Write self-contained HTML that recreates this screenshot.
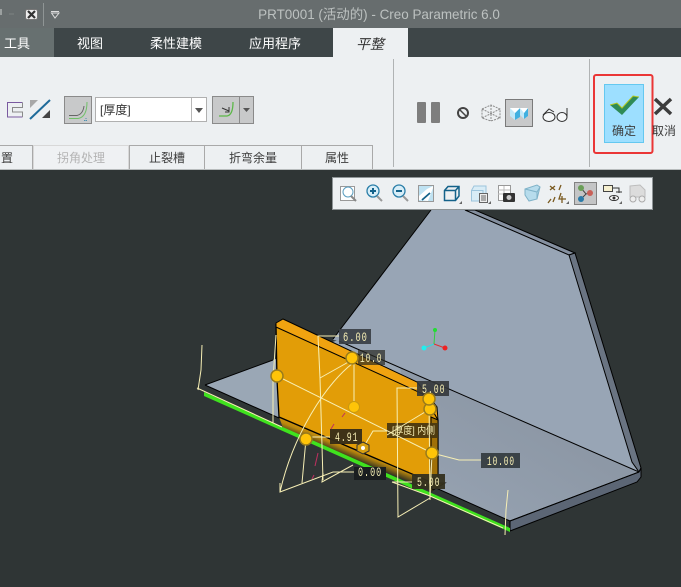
<!DOCTYPE html>
<html><head><meta charset="utf-8"><style>
html,body{margin:0;padding:0;background:#2f3535;overflow:hidden}
svg{display:block;position:absolute;left:0;top:0}
text{font-family:"Liberation Sans","Noto Sans CJK SC",sans-serif}
.t{font-size:13px;fill:#fff;text-anchor:middle}
.g{font-size:12px;fill:#3c3c3c;text-anchor:middle}
.d{font-family:"Liberation Mono",monospace;font-size:13px;fill:#f7efb5;letter-spacing:1.5px}
</style></head><body>
<svg width="681" height="587" viewBox="0 0 681 587" xmlns="http://www.w3.org/2000/svg">
<defs>
<linearGradient id="og" gradientUnits="userSpaceOnUse" x1="362" y1="446" x2="356" y2="461"><stop offset="0" stop-color="#e29d07"/><stop offset=".5" stop-color="#b8860e"/><stop offset="1" stop-color="#2f3020"/></linearGradient>
<linearGradient id="pl" gradientUnits="userSpaceOnUse" x1="530" y1="420" x2="470" y2="520"><stop offset="0" stop-color="#8d98a6"/><stop offset="1" stop-color="#95a1b0"/></linearGradient>
</defs>
<rect width="681" height="587" fill="#2f3535"/>

<!-- model -->
<g stroke="#000" stroke-width="1">
<polygon points="431,210 475,210 575,253 641,468 639,472 339,341 333,340 340,330" fill="#98a5b5" stroke="none"/>
<polygon points="465,210 475,210 575,253 569,255" fill="#8590a0"/>
<polygon points="569,255 575,253 641,468 639,472 632,462" fill="#6a7482"/>
<polygon points="205,385 273,360 339,340 639,472 510,521" fill="url(#pl)" stroke="none"/>
<polygon points="205,385 273,360 339,340 400,367 420,480" fill="#9aa7b5" stroke="none"/>
<polygon points="639,472 641,468 641,477 637,482 510,531 510,521" fill="#5c6675"/>
<polyline points="431,210 333,339" fill="none"/>
<polyline points="339,341 639,472" fill="none"/>
<polyline points="205,385 510,521 639,472" fill="none"/>
<polyline points="205,385 273,360" fill="none"/>
<line x1="510" y1="521" x2="510" y2="531"/>
</g>

<polygon points="279,417 433,483 433,492 330,449 283,428" fill="url(#og)"/>
<polygon points="276,325 423,390 438,420 438,483 433,483 279,417 277,380" fill="#e29d07" stroke="#000" stroke-width="1.300"/>
<polygon points="276,323 283,319 417,382 437,407 438,420 423,394 276,327" fill="#f0a310" stroke="#000"/>
<polygon points="431,417 438,420 438,483 445,483 433,490 431,484" fill="#a07008" stroke="#000"/>
<polygon points="204,392 510,528 510,532 204,396" fill="#3fe21e"/>

<!-- dim boxes -->
<g>
<rect x="339" y="329" width="32" height="15" fill="#3a3f45" fill-opacity=".92"/>
<rect x="358" y="350" width="27" height="15" fill="#2a2a22" fill-opacity=".7"/>
<rect x="417" y="381" width="32" height="15" fill="#333638" fill-opacity=".9"/>
<rect x="330" y="429" width="32" height="15" fill="#352c18" fill-opacity=".95"/>
<rect x="387" y="423" width="51" height="15" fill="#4a3810" fill-opacity=".95"/>
<rect x="354" y="467" width="32" height="13" fill="#1a1e20"/>
<rect x="412" y="474" width="33" height="15" fill="#33301f" fill-opacity=".95"/>
<rect x="481" y="453" width="39" height="15" fill="#3a4247"/>
</g>

<!-- sketch lines -->
<g fill="none" stroke="#f7efb5" stroke-width="1">
<polyline points="277,376 432,453 459,460 481,460"/>
<polyline points="339,336 318,336 320,378 323,480"/>
<polyline points="320,378 352,360"/>
<polyline points="354,363 354,407"/>
<path d="M353,363 C325,385 293,435 280,492"/>
<polyline points="280,483 280,492 333,472 354,472"/>
<polyline points="353,465 322,482 323,473"/>
<polyline points="306,439 302,483"/>
<polyline points="310,437 330,437"/>
<polyline points="417,388 397,388 398,517 430,498"/>
<polyline points="430,409 387,435"/>
<polyline points="429,399 430,500"/>
<polyline points="432,453 430,498"/>
<polyline points="412,482 392,482"/>
<polyline points="363,448 373,431 387,431"/>
<polyline points="202,345 201,370 198,390"/>
<polyline points="197,388 282,427"/>
<polyline points="276,335 273,380 273,423"/>
<polyline points="508,490 506,510 505,535"/>
<polyline points="503,528 430,496 392,482"/>
</g>
<g stroke="#c03060" stroke-width="1"><line x1="345" y1="413" x2="342" y2="417"/><line x1="334" y1="424" x2="331" y2="429"/><line x1="318" y1="453" x2="315" y2="466"/><line x1="314" y1="475" x2="312" y2="479"/></g>

<!-- handles -->
<g fill="#ffc408" stroke="#9a7c1c" stroke-width="1.500">
<circle cx="277" cy="376" r="6"/><circle cx="352" cy="358" r="6"/><circle cx="306" cy="439" r="6"/><circle cx="430" cy="409" r="6"/><circle cx="429" cy="399" r="6"/><circle cx="432" cy="453" r="6"/>
</g>
<circle cx="354" cy="407" r="5.500" fill="#ffc408" stroke="#c99a10"/>
<polygon points="363,442 369,445 369,451 363,454 357,451 357,445" fill="#d8a010" stroke="#333"/>
<circle cx="363" cy="448" r="2" fill="#fff"/>

<!-- dim text -->
<text class="d" transform="translate(343,341) scale(.67,1)">6.00</text>
<text class="d" transform="translate(360,362) scale(.6,1)">10.0</text>
<text class="d" transform="translate(422,393) scale(.63,1)">5.00</text>
<text class="d" transform="translate(335,441) scale(.63,1)">4.91</text>
<text x="392" y="434" font-size="10" fill="#f7efb5" textLength="43" lengthAdjust="spacingAndGlyphs">[厚度] 内侧</text>
<text class="d" transform="translate(358,476) scale(.65,1)">0.00</text>
<text class="d" transform="translate(417,486) scale(.63,1)">5.00</text>
<text class="d" transform="translate(487,465) scale(.6,1)">10.00</text>

<!-- csys -->
<polyline points="434,344 424,348" fill="none" stroke="#25e0e0"/>
<line x1="435" y1="330" x2="434" y2="344" stroke="#30d040"/>
<line x1="434" y1="344" x2="445" y2="348" stroke="#e03030"/>
<circle cx="435" cy="330" r="2" fill="#22dd33"/><circle cx="424" cy="348" r="2.500" fill="#22eeee"/><circle cx="445" cy="348" r="2.500" fill="#ee2222"/>

<!-- title bar -->
<rect width="681" height="28" fill="#676d6e"/>
<text x="379" y="19" text-anchor="middle" font-size="13.440" fill="#bcc1c0">PRT0001 (活动的) - Creo Parametric 6.0</text>
<rect x="0" y="9" width="2" height="6" fill="#9ba0a0"/>
<path d="M9,14 H14" stroke="#7d8383"/>
<rect x="25.500" y="9.500" width="12" height="10" rx="2" fill="#eee" stroke="#777"/>
<path d="M28,11 L35,18 M35,11 L28,18" stroke="#333" stroke-width="2.200"/>
<line x1="43.500" y1="3" x2="43.500" y2="26" stroke="#8f9595"/>
<polygon points="51.500,13 59,13 55,18" fill="none" stroke="#ddd"/>
<line x1="51" y1="11.500" x2="59" y2="11.500" stroke="#ddd"/>

<!-- tab bar -->
<rect y="28" width="681" height="29" fill="#3e4648"/>
<rect y="28" width="54" height="29" fill="#677070"/>
<rect x="333" y="28" width="75" height="29" fill="#edf0f2"/>
<text class="t" x="17" y="48">工具</text>
<text class="t" x="90" y="48">视图</text>
<text class="t" x="176" y="48">柔性建模</text>
<text class="t" x="275" y="48">应用程序</text>
<text x="370" y="49" font-size="14" fill="#333" text-anchor="middle" font-style="italic">平整</text>

<!-- ribbon -->
<rect y="57" width="681" height="112" fill="#edf0f2"/>
<rect y="169" width="681" height="1" fill="#b8bcbd"/>
<line x1="393.500" y1="59" x2="393.500" y2="167" stroke="#b0b3b4"/>
<line x1="589.500" y1="59" x2="589.500" y2="167" stroke="#b0b3b4"/>

<!-- ribbon left icons -->
<path d="M22.500,102.500 H7.500 V117 H22.500" fill="none" stroke="#7a5aa0"/>
<path d="M22.500,102.500 V107.500 H12.500 V112 H22.500 V117" fill="none" stroke="#8a8a8a"/>
<line x1="30" y1="119" x2="50" y2="100" stroke="#1f6b9a" stroke-width="2"/>
<polygon points="30,100 38,100 30,108" fill="#a8a8a8"/>
<polygon points="50,118 42,118 50,110" fill="#444"/>
<rect x="64.500" y="96.500" width="27" height="27" fill="#c8c9ca" stroke="#8a8a8a"/>
<path d="M69,118.500 H78 Q87,117 87,102" fill="none" stroke="#70c068"/>
<path d="M69,115.500 H77 Q83,114 84,106" fill="none" stroke="#666"/>
<path d="M84,120.500 H88 M86,118 V122" stroke="#4a90b0" stroke-dasharray="1 1"/>
<rect x="95.500" y="97.500" width="111" height="24" fill="#fff" stroke="#b0b0b0"/>
<line x1="191.500" y1="98" x2="191.500" y2="121" stroke="#b8b8b8"/>
<polygon points="195,108 203,108 199,113" fill="#555"/>
<text x="100" y="114" font-size="12" fill="#333">[厚度]</text>
<rect x="212.500" y="96.500" width="41" height="27" fill="#c8c9ca" stroke="#8a8a8a"/>
<line x1="239.500" y1="97" x2="239.500" y2="123" stroke="#8a8a8a"/>
<path d="M219,116 H227 Q233,115 233,102" fill="none" stroke="#5cb848" stroke-width="1.300"/>
<path d="M222,108 L229,111 M229,107 V112 H225" fill="none" stroke="#333"/>
<polygon points="243,108 250,108 246.500,112" fill="#555"/>

<!-- group tabs -->
<g fill="#edf0f2" stroke="#a9a9a9" stroke-width="1">
<path d="M-2,169 V145.500 H32.500 V169"/>
<path d="M129.500,169 V145.500 H204.500 V169"/>
<path d="M204.500,169 V145.500 H301.500 V169"/>
<path d="M301.500,169 V145.500 H372.500 V169"/>
</g>
<path d="M33.500,169 V145.500 H128.500 V169" fill="#eff1f3" stroke="#d8d8d8"/>
<text class="g" x="7" y="162">置</text>
<text class="g" x="81" y="162" style="fill:#b4b4b4">拐角处理</text>
<text class="g" x="167" y="162">止裂槽</text>
<text class="g" x="253" y="162">折弯余量</text>
<text class="g" x="337" y="162">属性</text>

<!-- pause / display icons -->
<rect x="417" y="102" width="9" height="21" rx="1" fill="#7e7e7e"/>
<rect x="431" y="102" width="9" height="21" rx="1" fill="#7e7e7e"/>
<circle cx="463" cy="113" r="5" fill="none" stroke="#444" stroke-width="2"/>
<line x1="459.500" y1="109.500" x2="466.500" y2="116.500" stroke="#444" stroke-width="1.500"/>
<path d="M482,109 L491,105 L500,109 L500,118 L491,121 L482,118 Z M491,105 V121 M482,109 L500,118 M500,109 L482,118" fill="none" stroke="#8c8c8c" stroke-dasharray="2 1"/>
<rect x="505.500" y="99.500" width="27" height="27" fill="#c8c9ca" stroke="#7a7a7a"/>
<polygon points="510,108 520,108 520,117 515,120 510,116" fill="#c0e8f8"/>
<polygon points="515,113 520,108 520,117 515,120" fill="#40b0e0"/>
<polygon points="520,108 528,108 528,116 524,119 520,115" fill="#c0e8f8"/>
<polygon points="524,113 528,108 528,116 524,119" fill="#40b0e0"/>
<polygon points="510,108 520,108 515,113" fill="#fff"/>
<polygon points="520,108 528,108 524,113" fill="#fff"/>
<ellipse cx="549" cy="117" rx="6" ry="4.500" fill="#f6f8f9" stroke="#333"/>
<ellipse cx="562" cy="117" rx="5" ry="4.500" fill="#f6f8f9" stroke="#333"/>
<path d="M543,115 L549,109 L554,112 M567,108 V117" fill="none" stroke="#333"/>

<!-- OK/Cancel -->
<rect x="594" y="75" width="58.500" height="78" rx="2" fill="none" stroke="#ea3636" stroke-width="2"/>
<rect x="604.500" y="84.500" width="39" height="58" fill="#9ddfff" stroke="#64c8f0"/>
<polygon points="610,105 617,103 622,108 633,96 639,97 622,115" fill="#2e8b57"/>
<polyline points="610,105 617,103 622,108 633,96 639,97" fill="none" stroke="#b4c820"/>
<text class="g" x="624" y="135">确定</text>
<path d="M655,99 L671,114 M671,99 L655,114" stroke="#3d3d3d" stroke-width="3.500"/>
<text class="g" x="664" y="135">取消</text>

<!-- view toolbar -->
<rect x="332.500" y="177.500" width="320" height="32" fill="#edf0f2" stroke="#8e9496"/>
<g fill="none">
<rect x="340.500" y="186.500" width="14" height="14" fill="#fff" stroke="#999"/>
<circle cx="348" cy="192" r="5" stroke="#5a9ec0"/><line x1="351" y1="196" x2="356" y2="201" stroke="#888" stroke-width="2"/>
<circle cx="373" cy="191" r="6" fill="#d8eef8" stroke="#2a7ea8" stroke-width="1.300"/><path d="M370,191 H376 M373,188 V194" stroke="#14628a" stroke-width="2"/><line x1="377" y1="196" x2="382" y2="201" stroke="#999" stroke-width="2"/>
<circle cx="399" cy="191" r="6" fill="#d8eef8" stroke="#2a7ea8" stroke-width="1.300"/><path d="M396,191 H402" stroke="#14628a" stroke-width="2"/><line x1="403" y1="196" x2="408" y2="201" stroke="#999" stroke-width="2"/>
<rect x="418.500" y="185.500" width="15" height="16" fill="#bfe2f2" stroke="#999"/><polygon points="419,200 419,196 427,189 433,186 433,188 428,201" fill="#fff"/><line x1="422" y1="200" x2="430" y2="193" stroke="#14628a" stroke-width="1.800"/>
<path d="M444.500,190.500 L448,186.500 H459 V196 L455.500,200.500 H444.500 Z M444.500,190.500 H455.500 V200.500 M455.500,190.500 L459,186.500" stroke="#14628a" stroke-width="1.500"/>
<polygon points="459,204 462,204 462,201" fill="#666"/>
<path d="M471.500,190.500 L474,186 H486 V198 M471.500,190.500 H483 V201 H471.500 Z" fill="#d8ecf6" stroke="#9cc4dc"/>
<rect x="479.500" y="193.500" width="8" height="9" fill="#eee" stroke="#666"/>
<path d="M481,196 H486 M481,198 H486 M481,200 H486" stroke="#666"/>
<polygon points="488,204 491,204 491,201" fill="#666"/>
<rect x="498.500" y="185.500" width="12" height="15" fill="#fff" stroke="#999"/><path d="M498,190 H510 M498,194 H510 M504,186 V200" stroke="#bbb"/>
<rect x="503" y="193" width="12" height="9" rx="1" fill="#333"/><circle cx="509" cy="197.500" r="2.500" fill="#ccc"/>
<polygon points="525,189 537,185 540,187 537,199 529,201 525,195" fill="#b7dcec" stroke="#7fb2c8"/>
<path d="M525,189 L537,192 L540,187 M537,192 L537,199" stroke="#7fb2c8"/>
<path d="M550,186 L555,190 M555,186 L550,190 M561,185 L559,190 M553,202 L555,197 M561,193 L559,199 H566 M562,196 V203 M548,203 L551,199" stroke="#7a5a20" stroke-width="1.300"/>
<polygon points="566,204 569,204 569,201" fill="#666"/>
<rect x="574.500" y="182.500" width="22" height="22" fill="#c4c5c6" stroke="#828282"/>
<path d="M581,188 L586,194 L590,193 M586,194 L581,199" stroke="#444"/>
<circle cx="581" cy="188" r="3" fill="#6a9e58"/><circle cx="590" cy="193" r="3" fill="#c86058"/><circle cx="581" cy="199" r="3" fill="#2a7aa8"/>
<rect x="603.500" y="185.500" width="9" height="6" fill="#f6f0d0" stroke="#444"/><path d="M613,188 H619 V193 M616,192 H622" stroke="#333"/>
<ellipse cx="614" cy="198" rx="4.500" ry="2.500" fill="#fff" stroke="#333"/><circle cx="614" cy="198" r="1.500" fill="#333"/>
<polygon points="619,204 622,204 622,201" fill="#666"/>
<path d="M630,186 L640,185 L645,190 V197 H630 Z" fill="#dcdcdc" stroke="#bdbdbd"/>
<circle cx="633" cy="199" r="3" fill="#eee" stroke="#aaa"/><circle cx="642" cy="199" r="3" fill="#eee" stroke="#aaa"/>
</g>
</svg>
</body></html>
